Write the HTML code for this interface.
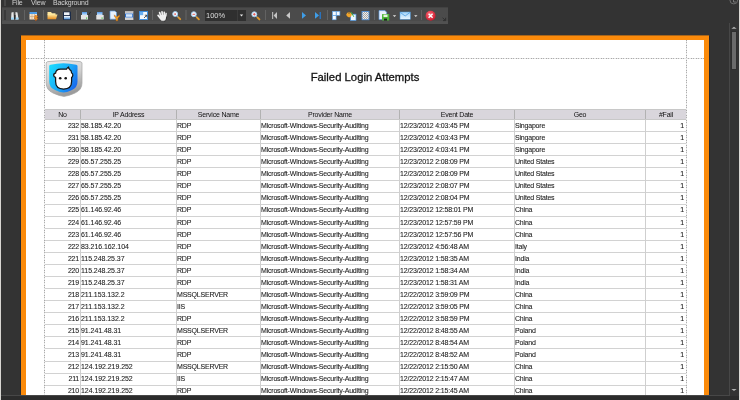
<!DOCTYPE html>
<html><head><meta charset="utf-8"><style>
*{margin:0;padding:0;box-sizing:border-box}
html,body{width:740px;height:400px;overflow:hidden;background:#333333;font-family:"Liberation Sans",sans-serif;position:relative}
.a{position:absolute}
#menu{position:absolute;left:0;top:0;width:740px;height:7px;background:#333}
#menu span{position:absolute;top:-2px;font-size:7px;color:#d0d0d0;line-height:9px;letter-spacing:-0.2px}
#tb{position:absolute;left:2px;top:7px;width:446px;height:17px;background:#4b4b4b;border-bottom:3px solid #515151;border-top:1px solid #424242}
.sep{position:absolute;top:10px;width:1px;height:10px;background:#606060}
#page{position:absolute;left:21px;top:36px;width:688px;height:400px;background:#fb8a0a;box-shadow:1px 0 0 0 #272a30,-1px 0 0 0 #272a30}
#white{position:absolute;left:26px;top:40px;width:678px;height:360px;background:#fff}
.dv{position:absolute;top:40px;width:1px;height:355px;background:repeating-linear-gradient(to bottom,#a8a8a8 0 1px,#e4e4e4 1px 2px,#b0b0b0 2px 3px,#e8e8e8 3px 5px)}
.dh{position:absolute;left:26px;width:678px;height:1px;background:repeating-linear-gradient(to right,#a8a8a8 0 1px,#e4e4e4 1px 2px,#b0b0b0 2px 3px,#e8e8e8 3px 5px)}
#hdr{position:absolute;left:44px;top:110px;width:642px;height:9px;background:#d9d6dc}
.hl{position:absolute;left:44px;width:642px;height:1px;background:#d2d2d2}
.hh{background:#c8c8c8}
.vh{position:absolute;top:110px;width:1px;height:9px;background:#b2b2b2}
.vl{position:absolute;top:120px;width:1px;height:280px;background:#cfcfcf}
.hc{position:absolute;top:110px;height:9px;font-size:7px;line-height:9px;text-align:center;color:#111;letter-spacing:-0.2px;white-space:nowrap}
.c{position:absolute;font-size:7px;line-height:11px;height:11px;color:#1a1a1a;-webkit-text-stroke:0.08px #1a1a1a;letter-spacing:-0.2px;white-space:nowrap}
.r{text-align:right}
.n{letter-spacing:-0.06px}
.d{letter-spacing:-0.16px}
#title{position:absolute;left:260px;top:71px;width:210px;text-align:center;font-size:11.3px;line-height:13px;color:#141414;-webkit-text-stroke:0.3px #141414}
#bottom{position:absolute;left:0;top:396px;width:740px;height:4px;background:#2c2c2c}
#bline{position:absolute;left:0;top:395px;width:730px;height:1px;background:#474747}
#sbl{position:absolute;left:729px;top:23px;width:1px;height:373px;background:#474747}
#thumb{position:absolute;left:732px;top:32px;width:4px;height:37px;background:#6b6b6b;box-shadow:0 0 0 1px #2e2e2e}
#rstrip{position:absolute;left:739px;top:0;width:1px;height:400px;background:#dcdad6}
#zoomtxt{position:absolute;left:206px;top:10px;font-size:7.5px;line-height:11px;color:#dcdcdc}
#lstrip{position:absolute;left:0;top:0;width:1px;height:400px;background:#d8d6d2}
</style></head><body><div id="root" style="position:absolute;left:0;top:0;width:740px;height:400px;will-change:transform">
<div id="menu"><span style="left:12px">File</span><span style="left:31px">View</span><span style="left:53px">Background</span></div>
<div id="tb"></div>
<svg class="a" style="left:0;top:0" width="450" height="26" viewBox="0 0 450 26">
<defs>
<linearGradient id="gFold" x1="0" y1="0" x2="0" y2="1"><stop offset="0" stop-color="#ffe9a0"/><stop offset="1" stop-color="#e48a1e"/></linearGradient>
<linearGradient id="gSave" x1="0" y1="0" x2="0" y2="1"><stop offset="0" stop-color="#ffffff"/><stop offset="1" stop-color="#4a8fd8"/></linearGradient>
<linearGradient id="gPrn" x1="0" y1="0" x2="0" y2="1"><stop offset="0" stop-color="#4f96e6"/><stop offset="1" stop-color="#d8ecff"/></linearGradient>
<radialGradient id="gRed" cx="0.4" cy="0.35" r="0.7"><stop offset="0" stop-color="#ff6a78"/><stop offset="1" stop-color="#c81428"/></radialGradient>
<linearGradient id="gMail" x1="0" y1="0" x2="0" y2="1"><stop offset="0" stop-color="#9fd2f8"/><stop offset="1" stop-color="#e8f5ff"/></linearGradient>
<pattern id="chk" width="2" height="2" patternUnits="userSpaceOnUse"><rect width="2" height="2" fill="#eeeeee"/><rect width="1" height="1" fill="#a8a8a8"/><rect x="1" y="1" width="1" height="1" fill="#a8a8a8"/></pattern>
</defs>
<!-- grips -->
<rect x="4" y="0" width="2" height="6" fill="#474747"/>
<rect x="4" y="10" width="2" height="10" fill="#3a3a3a"/>
<!-- separators -->
<g fill="#626262">
<rect x="24" y="10" width="1" height="10"/><rect x="43" y="10" width="1" height="10"/><rect x="76" y="10" width="1" height="10"/>
<rect x="152" y="10" width="1" height="10"/><rect x="185" y="10" width="2" height="10" fill="#585858"/><rect x="265" y="10" width="1" height="10"/>
<rect x="327" y="10" width="1" height="10"/><rect x="374" y="10" width="1" height="10"/><rect x="421" y="10" width="1" height="10"/>
</g>
<!-- binoculars -->
<path d="M11.5 12.5 L13.5 12 L14 19.5 L11 19.5 Z" fill="#e6e6e6"/>
<path d="M15.5 12 L17.5 12.5 L18.5 19.5 L15.5 19.5 Z" fill="#e6e6e6"/>
<rect x="11" y="17.5" width="3" height="2" fill="#9bd6f8"/><rect x="15.5" y="17.5" width="3" height="2" fill="#9bd6f8"/>
<rect x="14" y="15" width="1.5" height="4" fill="#2a2a2a"/>
<!-- calendar -->
<rect x="29.5" y="12" width="7.5" height="2" fill="#4a9ae6"/>
<rect x="29.5" y="14" width="7.5" height="5.5" fill="#f2e2cc"/>
<path d="M29.5 16.5 H37 M32 14 V19.5 M34.5 14 V19.5" stroke="#c9a57a" stroke-width="0.6"/>
<path d="M35 15.5 L38 16 L36.5 18 L38 18.5 L35.5 21 L36 19 L34.5 18.8 Z" fill="#f2a020" stroke="#b84810" stroke-width="0.5"/>
<!-- folder -->
<path d="M47.5 12 H51 L52 13.2 H55.5 V15 H47.5 Z" fill="#fde7a0"/>
<path d="M47.5 14.5 H57.5 L56 19.3 H47.5 Z" fill="url(#gFold)"/>
<!-- save -->
<rect x="63" y="11.5" width="8" height="8.5" rx="0.8" fill="#1b2b48"/>
<rect x="64" y="12.3" width="5.5" height="2.8" fill="#eef2f8"/>
<rect x="64" y="16" width="6" height="3.3" fill="url(#gSave)"/>
<!-- printer 1 -->
<rect x="82" y="12" width="5" height="3.5" fill="url(#gPrn)"/>
<rect x="81" y="15" width="7" height="4.5" fill="#e4e4e4"/>
<rect x="86" y="17.5" width="1.2" height="1.2" fill="#3cc23c"/>
<path d="M88.6 15 L90.6 11.8" stroke="#262626" stroke-width="0.9"/>
<!-- printer 2 -->
<rect x="97" y="12" width="5.5" height="3.5" fill="url(#gPrn)"/>
<rect x="96.3" y="15" width="7.4" height="4.5" fill="#e4e4e4"/>
<rect x="101.5" y="17.5" width="1.2" height="1.2" fill="#3cc23c"/>
<!-- doc wrench -->
<path d="M110 11 H115 L116.5 12.5 V19.2 H110 Z" fill="#e8f1fc" stroke="#5b9be0" stroke-width="0.7"/>
<path d="M114.3 14.8 Q115.5 16.5 116.8 16.8 Q118 16.5 119.6 14.8 Q120 17 118 18 L117.8 20.8 L116 20.8 L115.8 18 Q114 17 114.3 14.8 Z" fill="#f0a22a" stroke="#b05a10" stroke-width="0.4"/>
<!-- page layout -->
<rect x="125" y="11" width="8.2" height="9" fill="#f4f4f4"/>
<rect x="125" y="11" width="8.2" height="1.8" fill="#b8b8b8"/>
<rect x="125" y="18.2" width="8.2" height="1.8" fill="#cfcfcf"/>
<rect x="125" y="13.5" width="8.2" height="4" fill="#2f6fc8"/>
<rect x="126" y="14.2" width="6.2" height="2.6" fill="#d6e8fb"/>
<!-- page setup -->
<rect x="139" y="11" width="9" height="9" fill="#3f8ede"/>
<rect x="140" y="12" width="7" height="7" fill="#f4f8fc"/>
<rect x="140" y="12" width="3.2" height="3.2" fill="#6aaef0"/>
<path d="M144 18 L146.8 15.2 M146.8 15.2 V17.2 M146.8 15.2 H144.8" stroke="#333" stroke-width="0.8"/>
<!-- hand -->
<g stroke="#f0f0f0" stroke-linecap="round" fill="none">
<path d="M159.6 12.6 L160.9 16.2" stroke-width="1.7"/>
<path d="M162 11.8 L162.5 16" stroke-width="1.7"/>
<path d="M164.3 12.3 L164.2 16" stroke-width="1.7"/>
<path d="M166.1 13.6 L165.6 16.5" stroke-width="1.5"/>
<path d="M158.1 15.4 L160.6 18.4" stroke-width="1.7"/>
</g>
<path d="M159.8 15 L166.3 14.8 L165.8 19 L164.8 20.8 L161.6 20.8 L159.9 19 Z" fill="#f0f0f0"/>
<path d="M166.8 16.5 L166.3 19.5 M165.5 21 L164 21.3" stroke="#2a2a2a" stroke-width="0.7"/>
<!-- zoom tool -->
<path d="M178.2 17.2 L180.2 19.2" stroke="#e0982a" stroke-width="1.9" stroke-linecap="round"/><path d="M176.8 15.8 L178.2 17.2" stroke="#7eb6e4" stroke-width="0.9"/>
<circle cx="175.2" cy="14" r="2.5" fill="#f6f9fc" stroke="#9cc8ec" stroke-width="0.9"/>
<circle cx="175.1" cy="14.1" r="0.85" fill="#e05050"/>
<!-- zoom out -->
<path d="M195.6 16 L196.9 17.3" stroke="#7eb6e4" stroke-width="0.9"/><path d="M196.9 17.3 L198.9 19.3" stroke="#e0982a" stroke-width="1.9" stroke-linecap="round"/>
<circle cx="193.8" cy="14.2" r="2.5" fill="#f6f9fc" stroke="#9cc8ec" stroke-width="0.9"/>
<rect x="192.5" y="13.8" width="2.6" height="0.9" fill="#e05050"/>
<!-- combo -->
<rect x="205" y="10" width="41" height="11" fill="#2f2f2f"/>
<rect x="237" y="10" width="1" height="11" fill="#3c3c3c"/>
<path d="M239.8 14.6 H243.2 L241.5 16.6 Z" fill="#e8e8e8"/>
<!-- zoom in -->
<path d="M256.1 16.1 L257.4 17.4" stroke="#7eb6e4" stroke-width="0.9"/><path d="M257.4 17.4 L259.4 19.4" stroke="#e0982a" stroke-width="1.9" stroke-linecap="round"/>
<circle cx="254.3" cy="14.3" r="2.5" fill="#f6f9fc" stroke="#9cc8ec" stroke-width="0.9"/>
<path d="M253 14.3 H255.6 M254.3 13 V15.6" stroke="#e05050" stroke-width="0.9"/>
<!-- nav -->
<rect x="272" y="12" width="1.2" height="7" fill="#b4b4b4"/>
<path d="M277 12 L273.6 15.5 L277 19 Z" fill="#c4c4c4"/>
<path d="M290 12 L286.2 15.4 L290 18.8 Z" fill="#c8c8c8"/>
<path d="M302 12 L306 15.4 L302 18.8 Z" fill="#3f9ee8"/>
<path d="M315 12 L319 15.4 L315 18.8 Z" fill="#3f9ee8"/>
<rect x="319.5" y="12" width="1.5" height="7" fill="#2a72bc"/>
<!-- multipage -->
<g fill="#f6faff" stroke="#5aa2ea" stroke-width="0.6">
<rect x="332.5" y="11.3" width="3.6" height="4"/><rect x="336.3" y="11.3" width="3.6" height="4"/><rect x="332.5" y="15.6" width="3.6" height="4.2"/>
</g>
<!-- orange/doc -->
<rect x="350.6" y="14.2" width="5.4" height="6.3" fill="#eef6ff" stroke="#4b94e0" stroke-width="0.7"/>
<path d="M349 11.6 Q351.8 13.6 351.9 14.8 Q351.5 16.8 349.1 17.6 Q346.4 16.6 346.2 14.8 Q346.6 13.2 349 11.6 Z" fill="#f2a52a"/>
<path d="M349 11 V13.8" stroke="#3a3a3a" stroke-width="0.8"/>
<path d="M351.2 12.2 L353.8 16.8" stroke="#3bb04a" stroke-width="1"/>
<!-- checkered -->
<rect x="362" y="11.4" width="7" height="8.4" fill="url(#chk)" stroke="#4b90dc" stroke-width="0.8"/>
<!-- export -->
<path d="M379 10.6 H385 L386.6 12.2 V19.6 H379 Z" fill="#eaf2fc" stroke="#5b9be0" stroke-width="0.7"/>
<rect x="382" y="14" width="7.2" height="6.6" rx="0.5" fill="#4fb83a"/>
<rect x="383.5" y="14.6" width="4" height="2.4" fill="#e8f5e0"/>
<rect x="384" y="18.6" width="3" height="2" fill="#1e1e1e"/>
<path d="M392.8 15.2 H396.2 L394.5 17 Z" fill="#e0e0e0"/>
<!-- mail -->
<rect x="400" y="12" width="10.3" height="7.3" fill="url(#gMail)" stroke="#4c9ae0" stroke-width="0.5"/>
<path d="M400.3 12.4 L405.15 16 L410 12.4" fill="none" stroke="#4c9ae0" stroke-width="0.8"/>
<path d="M414.1 15.2 H417.5 L415.8 17 Z" fill="#e0e0e0"/>
<!-- close -->
<circle cx="430.6" cy="15.7" r="5" fill="url(#gRed)"/>
<path d="M428.6 13.7 L432.6 17.7 M432.6 13.7 L428.6 17.7" stroke="#fff" stroke-width="1.4"/>
<!-- corner grip -->
<path d="M442.6 17.8 L445.2 20.2 M445.6 17.8 V20.6 H443" fill="none" stroke="#303030" stroke-width="1"/>
</svg>

<div id="zoomtxt">100%</div>
<div id="page"></div><div class="a" style="left:21px;top:35px;width:688px;height:1px;background:#a8651a"></div>
<div id="white"></div>
<div class="dh" style="top:58px"></div>
<svg class="a" style="left:44px;top:56px" width="40" height="42" viewBox="0 0 40 42">
<defs>
<linearGradient id="lgO" x1="0" y1="0" x2="0.3" y2="1"><stop offset="0" stop-color="#ececec"/><stop offset="0.5" stop-color="#d2d2d2"/><stop offset="1" stop-color="#9c9c9c"/></linearGradient>
<linearGradient id="lgB" x1="0" y1="0.2" x2="1" y2="0.8"><stop offset="0" stop-color="#1ad8ff"/><stop offset="0.55" stop-color="#1aa6f6"/><stop offset="1" stop-color="#1a62ee"/></linearGradient>
</defs>
<path d="M2.2 7 Q2.5 5.8 4 5.6 Q20 3.4 36 5.6 Q37.6 5.8 38 7 L38 27 Q38 34 31 37 Q24 40.2 20 40.4 Q16 40.2 9 37 Q2.2 34 2.2 27 Z" fill="url(#lgO)" stroke="#a4a4a4" stroke-width="0.7"/>
<path d="M5.2 10 Q5.2 9 6.5 8.8 Q19.5 5.6 32.2 8.8 Q33.5 9 33.5 10 L33.5 25.5 Q33.5 31.5 28 34 Q22.5 36.5 19.5 36.6 Q16.5 36.5 11 34 Q5.2 31.5 5.2 25.5 Z" fill="url(#lgB)"/>
<path d="M11.6 17.2 Q11.8 13.4 16.5 13.2 L22.5 13.2 Q23.2 11.8 24.6 11 Q24.4 12.6 25.8 13.6 Q27.6 14.6 27.6 17 Q29 17.3 28.8 19.4 Q28.6 21.2 27.6 21.4 L27.6 25.5 Q27.6 33 19.6 33 Q11.6 33 11.6 25.5 L11.6 21.4 Q9.9 21.2 9.7 19.4 Q9.7 17.2 11.6 17.2 Z" fill="#fff" stroke="#141414" stroke-width="1.25" stroke-linejoin="round"/>
<circle cx="16.2" cy="22.3" r="1.3" fill="#111"/>
<circle cx="21.7" cy="22.3" r="1.3" fill="#111"/>
</svg>

<div id="title">Failed Login Attempts</div>
<div id="hdr"></div>
<div class="hl hh" style="top:109px"></div>
<div class="hl hh" style="top:119px"></div>
<div class="hl" style="top:131px"></div>
<div class="hl" style="top:143px"></div>
<div class="hl" style="top:155px"></div>
<div class="hl" style="top:167px"></div>
<div class="hl" style="top:180px"></div>
<div class="hl" style="top:192px"></div>
<div class="hl" style="top:204px"></div>
<div class="hl" style="top:216px"></div>
<div class="hl" style="top:228px"></div>
<div class="hl" style="top:240px"></div>
<div class="hl" style="top:252px"></div>
<div class="hl" style="top:264px"></div>
<div class="hl" style="top:276px"></div>
<div class="hl" style="top:288px"></div>
<div class="hl" style="top:300px"></div>
<div class="hl" style="top:312px"></div>
<div class="hl" style="top:324px"></div>
<div class="hl" style="top:336px"></div>
<div class="hl" style="top:348px"></div>
<div class="hl" style="top:361px"></div>
<div class="hl" style="top:373px"></div>
<div class="hl" style="top:385px"></div>
<div class="hl" style="top:397px"></div>
<div class="vl" style="left:80px"></div><div class="vh" style="left:80px"></div>
<div class="vl" style="left:176px"></div><div class="vh" style="left:176px"></div>
<div class="vl" style="left:260px"></div><div class="vh" style="left:260px"></div>
<div class="vl" style="left:399px"></div><div class="vh" style="left:399px"></div>
<div class="vl" style="left:514px"></div><div class="vh" style="left:514px"></div>
<div class="vl" style="left:645px"></div><div class="vh" style="left:645px"></div>
<div class="hc" style="left:45px;width:35px">No</div>
<div class="hc" style="left:81px;width:95px">IP Address</div>
<div class="hc" style="left:177px;width:83px">Service Name</div>
<div class="hc" style="left:261px;width:138px">Provider Name</div>
<div class="hc" style="left:400px;width:114px">Event Date</div>
<div class="hc" style="left:515px;width:130px">Geo</div>
<div class="hc" style="left:646px;width:40px">#Fail</div>
<div class="c r" style="top:120px;left:45px;width:34px">232</div>
<div class="c n" style="top:120px;left:81px">58.185.42.20</div>
<div class="c" style="top:120px;left:177px">RDP</div>
<div class="c" style="top:120px;left:261px">Microsoft-Windows-Security-Auditing</div>
<div class="c d" style="top:120px;left:400px">12/23/2012 4:03:45 PM</div>
<div class="c" style="top:120px;left:515px">Singapore</div>
<div class="c r" style="top:120px;left:646px;width:38px">1</div>
<div class="c r" style="top:132px;left:45px;width:34px">231</div>
<div class="c n" style="top:132px;left:81px">58.185.42.20</div>
<div class="c" style="top:132px;left:177px">RDP</div>
<div class="c" style="top:132px;left:261px">Microsoft-Windows-Security-Auditing</div>
<div class="c d" style="top:132px;left:400px">12/23/2012 4:03:43 PM</div>
<div class="c" style="top:132px;left:515px">Singapore</div>
<div class="c r" style="top:132px;left:646px;width:38px">1</div>
<div class="c r" style="top:144px;left:45px;width:34px">230</div>
<div class="c n" style="top:144px;left:81px">58.185.42.20</div>
<div class="c" style="top:144px;left:177px">RDP</div>
<div class="c" style="top:144px;left:261px">Microsoft-Windows-Security-Auditing</div>
<div class="c d" style="top:144px;left:400px">12/23/2012 4:03:41 PM</div>
<div class="c" style="top:144px;left:515px">Singapore</div>
<div class="c r" style="top:144px;left:646px;width:38px">1</div>
<div class="c r" style="top:156px;left:45px;width:34px">229</div>
<div class="c n" style="top:156px;left:81px">65.57.255.25</div>
<div class="c" style="top:156px;left:177px">RDP</div>
<div class="c" style="top:156px;left:261px">Microsoft-Windows-Security-Auditing</div>
<div class="c d" style="top:156px;left:400px">12/23/2012 2:08:09 PM</div>
<div class="c" style="top:156px;left:515px">United States</div>
<div class="c r" style="top:156px;left:646px;width:38px">1</div>
<div class="c r" style="top:168px;left:45px;width:34px">228</div>
<div class="c n" style="top:168px;left:81px">65.57.255.25</div>
<div class="c" style="top:168px;left:177px">RDP</div>
<div class="c" style="top:168px;left:261px">Microsoft-Windows-Security-Auditing</div>
<div class="c d" style="top:168px;left:400px">12/23/2012 2:08:09 PM</div>
<div class="c" style="top:168px;left:515px">United States</div>
<div class="c r" style="top:168px;left:646px;width:38px">1</div>
<div class="c r" style="top:180px;left:45px;width:34px">227</div>
<div class="c n" style="top:180px;left:81px">65.57.255.25</div>
<div class="c" style="top:180px;left:177px">RDP</div>
<div class="c" style="top:180px;left:261px">Microsoft-Windows-Security-Auditing</div>
<div class="c d" style="top:180px;left:400px">12/23/2012 2:08:07 PM</div>
<div class="c" style="top:180px;left:515px">United States</div>
<div class="c r" style="top:180px;left:646px;width:38px">1</div>
<div class="c r" style="top:192px;left:45px;width:34px">226</div>
<div class="c n" style="top:192px;left:81px">65.57.255.25</div>
<div class="c" style="top:192px;left:177px">RDP</div>
<div class="c" style="top:192px;left:261px">Microsoft-Windows-Security-Auditing</div>
<div class="c d" style="top:192px;left:400px">12/23/2012 2:08:04 PM</div>
<div class="c" style="top:192px;left:515px">United States</div>
<div class="c r" style="top:192px;left:646px;width:38px">1</div>
<div class="c r" style="top:204px;left:45px;width:34px">225</div>
<div class="c n" style="top:204px;left:81px">61.146.92.46</div>
<div class="c" style="top:204px;left:177px">RDP</div>
<div class="c" style="top:204px;left:261px">Microsoft-Windows-Security-Auditing</div>
<div class="c d" style="top:204px;left:400px">12/23/2012 12:58:01 PM</div>
<div class="c" style="top:204px;left:515px">China</div>
<div class="c r" style="top:204px;left:646px;width:38px">1</div>
<div class="c r" style="top:217px;left:45px;width:34px">224</div>
<div class="c n" style="top:217px;left:81px">61.146.92.46</div>
<div class="c" style="top:217px;left:177px">RDP</div>
<div class="c" style="top:217px;left:261px">Microsoft-Windows-Security-Auditing</div>
<div class="c d" style="top:217px;left:400px">12/23/2012 12:57:59 PM</div>
<div class="c" style="top:217px;left:515px">China</div>
<div class="c r" style="top:217px;left:646px;width:38px">1</div>
<div class="c r" style="top:229px;left:45px;width:34px">223</div>
<div class="c n" style="top:229px;left:81px">61.146.92.46</div>
<div class="c" style="top:229px;left:177px">RDP</div>
<div class="c" style="top:229px;left:261px">Microsoft-Windows-Security-Auditing</div>
<div class="c d" style="top:229px;left:400px">12/23/2012 12:57:56 PM</div>
<div class="c" style="top:229px;left:515px">China</div>
<div class="c r" style="top:229px;left:646px;width:38px">1</div>
<div class="c r" style="top:241px;left:45px;width:34px">222</div>
<div class="c n" style="top:241px;left:81px">83.216.162.104</div>
<div class="c" style="top:241px;left:177px">RDP</div>
<div class="c" style="top:241px;left:261px">Microsoft-Windows-Security-Auditing</div>
<div class="c d" style="top:241px;left:400px">12/23/2012 4:56:48 AM</div>
<div class="c" style="top:241px;left:515px">Italy</div>
<div class="c r" style="top:241px;left:646px;width:38px">1</div>
<div class="c r" style="top:253px;left:45px;width:34px">221</div>
<div class="c n" style="top:253px;left:81px">115.248.25.37</div>
<div class="c" style="top:253px;left:177px">RDP</div>
<div class="c" style="top:253px;left:261px">Microsoft-Windows-Security-Auditing</div>
<div class="c d" style="top:253px;left:400px">12/23/2012 1:58:35 AM</div>
<div class="c" style="top:253px;left:515px">India</div>
<div class="c r" style="top:253px;left:646px;width:38px">1</div>
<div class="c r" style="top:265px;left:45px;width:34px">220</div>
<div class="c n" style="top:265px;left:81px">115.248.25.37</div>
<div class="c" style="top:265px;left:177px">RDP</div>
<div class="c" style="top:265px;left:261px">Microsoft-Windows-Security-Auditing</div>
<div class="c d" style="top:265px;left:400px">12/23/2012 1:58:34 AM</div>
<div class="c" style="top:265px;left:515px">India</div>
<div class="c r" style="top:265px;left:646px;width:38px">1</div>
<div class="c r" style="top:277px;left:45px;width:34px">219</div>
<div class="c n" style="top:277px;left:81px">115.248.25.37</div>
<div class="c" style="top:277px;left:177px">RDP</div>
<div class="c" style="top:277px;left:261px">Microsoft-Windows-Security-Auditing</div>
<div class="c d" style="top:277px;left:400px">12/23/2012 1:58:31 AM</div>
<div class="c" style="top:277px;left:515px">India</div>
<div class="c r" style="top:277px;left:646px;width:38px">1</div>
<div class="c r" style="top:289px;left:45px;width:34px">218</div>
<div class="c n" style="top:289px;left:81px">211.153.132.2</div>
<div class="c" style="top:289px;left:177px">MSSQLSERVER</div>
<div class="c" style="top:289px;left:261px">Microsoft-Windows-Security-Auditing</div>
<div class="c d" style="top:289px;left:400px">12/22/2012 3:59:09 PM</div>
<div class="c" style="top:289px;left:515px">China</div>
<div class="c r" style="top:289px;left:646px;width:38px">1</div>
<div class="c r" style="top:301px;left:45px;width:34px">217</div>
<div class="c n" style="top:301px;left:81px">211.153.132.2</div>
<div class="c" style="top:301px;left:177px">IIS</div>
<div class="c" style="top:301px;left:261px">Microsoft-Windows-Security-Auditing</div>
<div class="c d" style="top:301px;left:400px">12/22/2012 3:59:05 PM</div>
<div class="c" style="top:301px;left:515px">China</div>
<div class="c r" style="top:301px;left:646px;width:38px">1</div>
<div class="c r" style="top:313px;left:45px;width:34px">216</div>
<div class="c n" style="top:313px;left:81px">211.153.132.2</div>
<div class="c" style="top:313px;left:177px">RDP</div>
<div class="c" style="top:313px;left:261px">Microsoft-Windows-Security-Auditing</div>
<div class="c d" style="top:313px;left:400px">12/22/2012 3:58:59 PM</div>
<div class="c" style="top:313px;left:515px">China</div>
<div class="c r" style="top:313px;left:646px;width:38px">1</div>
<div class="c r" style="top:325px;left:45px;width:34px">215</div>
<div class="c n" style="top:325px;left:81px">91.241.48.31</div>
<div class="c" style="top:325px;left:177px">MSSQLSERVER</div>
<div class="c" style="top:325px;left:261px">Microsoft-Windows-Security-Auditing</div>
<div class="c d" style="top:325px;left:400px">12/22/2012 8:48:55 AM</div>
<div class="c" style="top:325px;left:515px">Poland</div>
<div class="c r" style="top:325px;left:646px;width:38px">1</div>
<div class="c r" style="top:337px;left:45px;width:34px">214</div>
<div class="c n" style="top:337px;left:81px">91.241.48.31</div>
<div class="c" style="top:337px;left:177px">RDP</div>
<div class="c" style="top:337px;left:261px">Microsoft-Windows-Security-Auditing</div>
<div class="c d" style="top:337px;left:400px">12/22/2012 8:48:54 AM</div>
<div class="c" style="top:337px;left:515px">Poland</div>
<div class="c r" style="top:337px;left:646px;width:38px">1</div>
<div class="c r" style="top:349px;left:45px;width:34px">213</div>
<div class="c n" style="top:349px;left:81px">91.241.48.31</div>
<div class="c" style="top:349px;left:177px">RDP</div>
<div class="c" style="top:349px;left:261px">Microsoft-Windows-Security-Auditing</div>
<div class="c d" style="top:349px;left:400px">12/22/2012 8:48:52 AM</div>
<div class="c" style="top:349px;left:515px">Poland</div>
<div class="c r" style="top:349px;left:646px;width:38px">1</div>
<div class="c r" style="top:361px;left:45px;width:34px">212</div>
<div class="c n" style="top:361px;left:81px">124.192.219.252</div>
<div class="c" style="top:361px;left:177px">MSSQLSERVER</div>
<div class="c" style="top:361px;left:261px">Microsoft-Windows-Security-Auditing</div>
<div class="c d" style="top:361px;left:400px">12/22/2012 2:15:50 AM</div>
<div class="c" style="top:361px;left:515px">China</div>
<div class="c r" style="top:361px;left:646px;width:38px">1</div>
<div class="c r" style="top:373px;left:45px;width:34px">211</div>
<div class="c n" style="top:373px;left:81px">124.192.219.252</div>
<div class="c" style="top:373px;left:177px">IIS</div>
<div class="c" style="top:373px;left:261px">Microsoft-Windows-Security-Auditing</div>
<div class="c d" style="top:373px;left:400px">12/22/2012 2:15:47 AM</div>
<div class="c" style="top:373px;left:515px">China</div>
<div class="c r" style="top:373px;left:646px;width:38px">1</div>
<div class="c r" style="top:385px;left:45px;width:34px">210</div>
<div class="c n" style="top:385px;left:81px">124.192.219.252</div>
<div class="c" style="top:385px;left:177px">RDP</div>
<div class="c" style="top:385px;left:261px">Microsoft-Windows-Security-Auditing</div>
<div class="c d" style="top:385px;left:400px">12/22/2012 2:15:45 AM</div>
<div class="c" style="top:385px;left:515px">China</div>
<div class="c r" style="top:385px;left:646px;width:38px">1</div>
<div class="dv" style="left:44px"></div>
<div class="dv" style="left:686px"></div>
<div id="bottom"></div><div id="bline"></div>
<div id="sbl"></div>
<div id="thumb"></div>
<svg class="a" style="left:724px;top:0" width="16" height="400" viewBox="0 0 16 400">
<path d="M10 26.8 L12.6 28.8 H7.4 Z" fill="#b0b0b0"/>
<path d="M10 391 L12.6 389 H7.4 Z" fill="#b0b0b0"/>
<circle cx="9.8" cy="0" r="3.9" fill="none" stroke="#6e6e6e" stroke-width="1"/>
<path d="M9.5 0 V2 H11.8" fill="none" stroke="#8a8a8a" stroke-width="0.8"/>
</svg>
<div id="lstrip"></div><div id="rstrip"></div>
</div></body></html>
